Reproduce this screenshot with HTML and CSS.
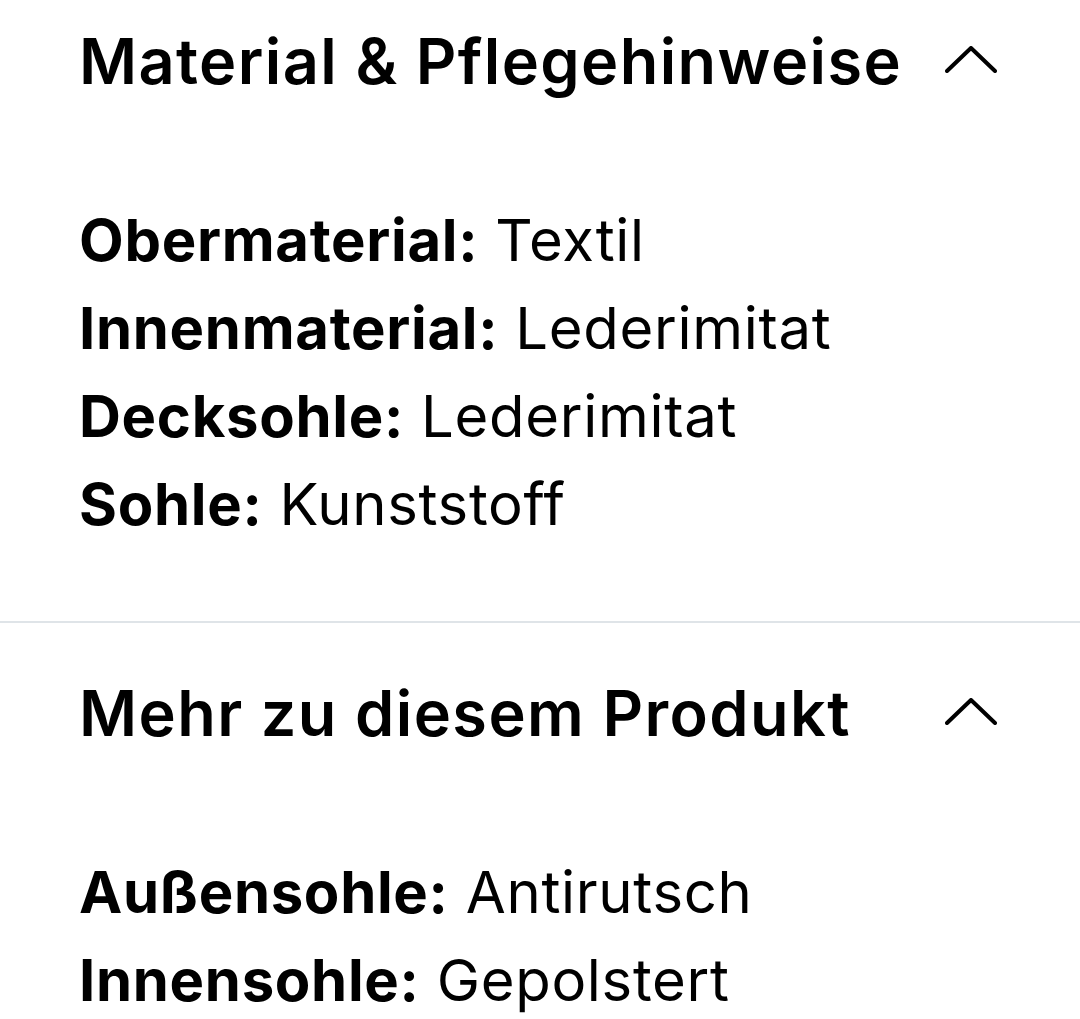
FILE: index.html
```html
<!DOCTYPE html>
<html lang="de">
<head>
    <meta charset="UTF-8">
    <meta name="viewport" content="width=device-width, initial-scale=1.0">
    <title>Produktdetails</title>
    <link rel="stylesheet" href="styles.css">
</head>
<body>
    <section class="accordion first">
        <div class="accordion-header">
            <h2>Material &amp; Pflegehinweise</h2>
            <svg class="chevron" width="52" height="27" viewBox="0 0 52 27">
                <polyline points="2,25 26,2 50,25" />
            </svg>
        </div>
        <div class="accordion-body">
            <p><strong>Obermaterial:</strong> Textil</p>
            <p><strong>Innenmaterial:</strong> Lederimitat</p>
            <p><strong>Decksohle:</strong> Lederimitat</p>
            <p><strong>Sohle:</strong> Kunststoff</p>
        </div>
    </section>

    <section class="accordion">
        <div class="accordion-header">
            <h2>Mehr zu diesem Produkt</h2>
            <svg class="chevron" width="52" height="27" viewBox="0 0 52 27">
                <polyline points="2,25 26,2 50,25" />
            </svg>
        </div>
        <div class="accordion-body">
            <p><strong>Außensohle:</strong> Antirutsch</p>
            <p><strong>Innensohle:</strong> Gepolstert</p>
        </div>
    </section>
</body>
</html>
```

FILE: styles.css
```css
body {
    margin: 0;
    font-family: Inter, "Liberation Sans", Arial, sans-serif;
    color: #000;
    background: #fff;
    overflow: hidden;
}
.accordion {
    padding: 50px 83px 73px 79px;
    border-top: 2px solid #dfe4e8;
}
.accordion.first {
    padding-top: 21px;
    border-top: none;
}
.accordion-header {
    display: flex;
    align-items: center;
    justify-content: space-between;
    height: 80px;
}
.accordion-header h2 {
    margin: 0;
    font-size: 63px;
    font-weight: 600;
    line-height: 80px;
    letter-spacing: 1.4px;
}
.chevron {
    margin-top: -4px;
}
.chevron polyline {
    fill: none;
    stroke: #000;
    stroke-width: 4;
    stroke-linecap: round;
    stroke-linejoin: round;
}
.accordion-body {
    margin-top: 95px;
}
.accordion-body p {
    margin: 0;
    font-size: 58px;
    line-height: 88px;
    letter-spacing: 0.7px;
}
.accordion-body strong {
    font-weight: 700;
}
```
